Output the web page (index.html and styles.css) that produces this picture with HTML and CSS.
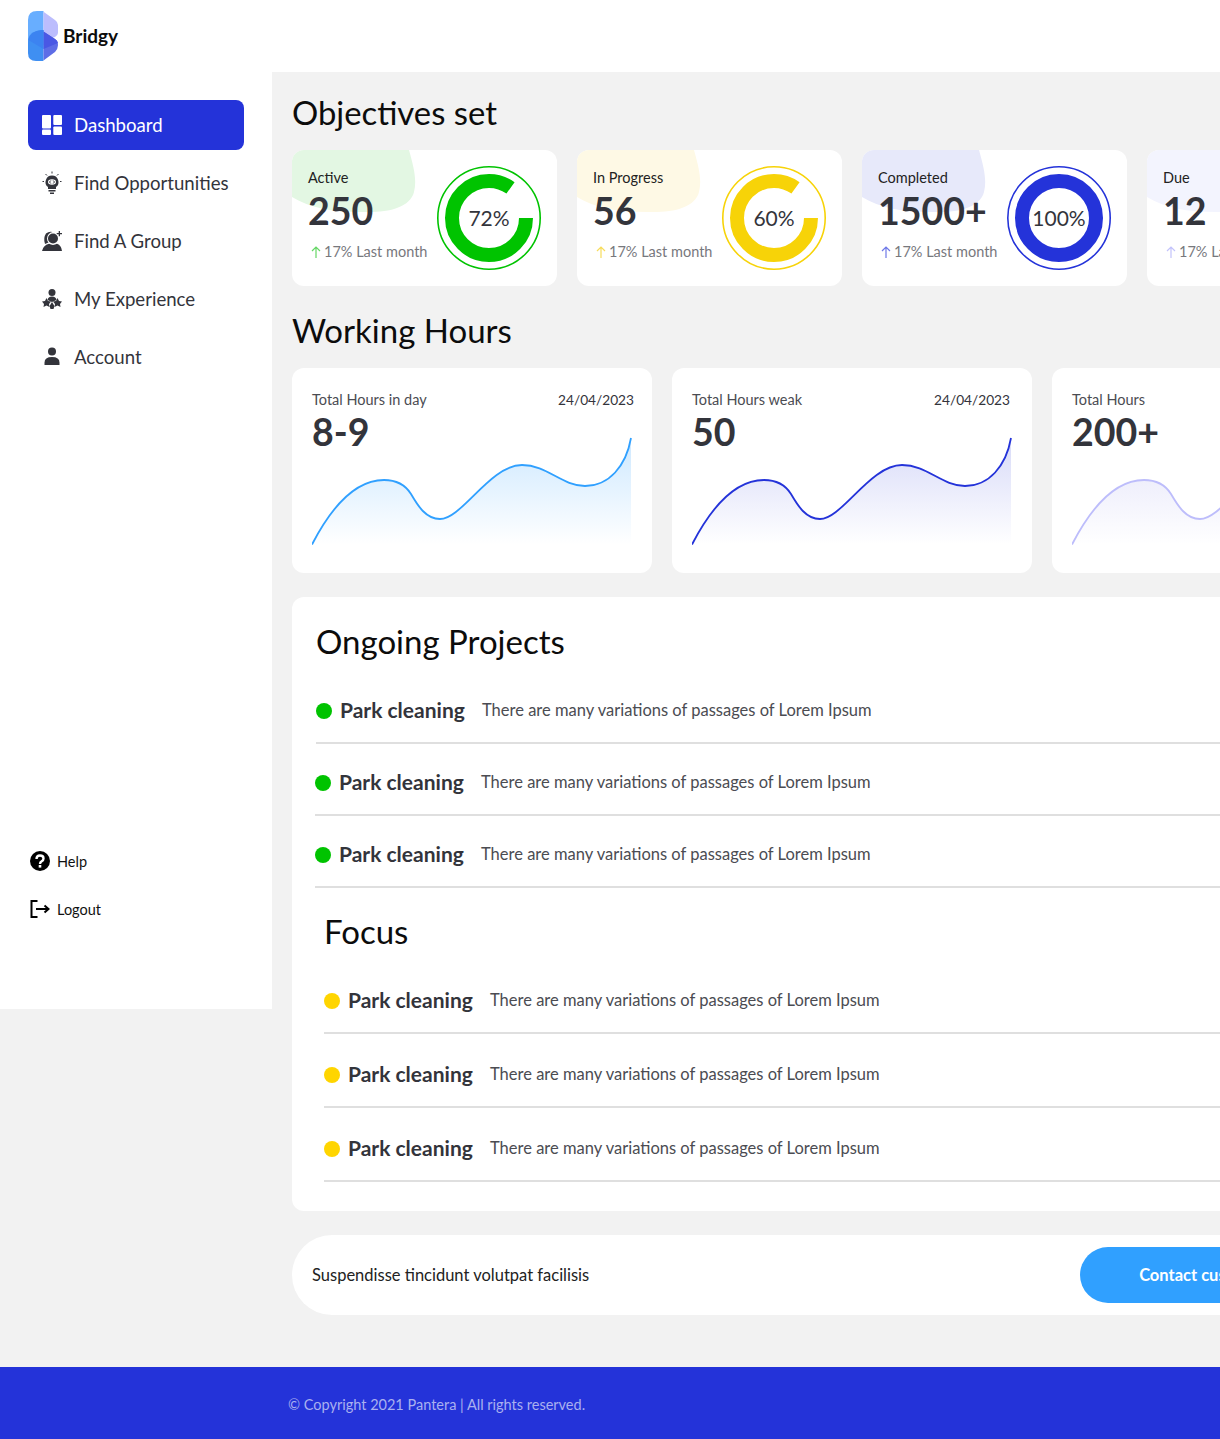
FILE: index.html
```html
<!DOCTYPE html>
<html lang="en">
<head>
<meta charset="utf-8">
<title>Bridgy</title>
<link rel="stylesheet" href="styles.css">
</head>
<body>
<header class="topbar">
  <svg class="logo" viewBox="0 0 30 50" aria-hidden="true">
    <path fill="#68aeff" d="M9 0H15.500V34H0V9Q0 0 9 0Z"/>
    <path fill="#bcbdfd" d="M15.500 .7L27 9Q30 11 30 14V22Q30 24 27 26L15.500 30Z"/>
    <path fill="#3f8ff2" d="M15.500 19H14Q0 20 0 31V42Q0 50 8 50H14Q15 50 15.500 49.500Z"/>
    <path fill="#5e6de6" d="M15.500 20.500L27 28Q30 30 30 34 30 38 27 41L15.500 49.500Z"/>
    <path fill="#4a58e4" d="M15.500 20.500L27 28Q29.500 29.500 30 32L15.500 38Z"/>
    <path fill="#3c83f1" d="M15.500 19H14Q2 20 .3 29L15.500 38Z"/>
  </svg>
  <span class="brand">Bridgy</span>
</header>
<div class="layout">
  <aside class="sidebar">
    <nav class="nav">
      <a class="nav-item nav-item--active">
        <svg class="nav-icon" viewBox="0 0 20 20" aria-hidden="true"><g fill="#fff"><rect width="9" height="13.500" rx="1"/><rect y="14.500" width="9" height="5.500" rx="1"/><rect x="11.300" width="8.700" height="10" rx="1"/><rect x="11.300" y="11.500" width="8.700" height="8.500" rx="1"/></g></svg>
        <span>Dashboard</span>
      </a>
      <a class="nav-item">
        <svg class="nav-icon nav-icon--bulb" viewBox="0 0 20 24" aria-hidden="true"><path fill="#33343b" d="M10 4.500a6.500 6.500 0 0 0-4 11.600V18h8v-1.900a6.500 6.500 0 0 0-4-11.600ZM6.500 19h7v1.500h-7ZM8 21.500h4V23H8Z"/><path stroke="#33343b" stroke-width="1" d="M10 .5V2.500M3.500 3 5 4.500M16.500 3 15 4.500M.5 10.500H2M18 10.500H19.500"/><ellipse cx="10" cy="11" rx="4" ry="2.800" fill="#fff"/><path fill="none" stroke="#33343b" stroke-width="1" d="M8.800 9.500 7.500 11 8.800 12.500M11.200 9.500 12.500 11 11.200 12.500"/></svg>
        <span>Find Opportunities</span>
      </a>
      <a class="nav-item">
        <svg class="nav-icon" viewBox="0 0 20 20" aria-hidden="true"><g fill="#33343b"><circle cx="11" cy="7.500" r="5"/><path d="M4 2.500Q7 0 10.500 1 5.500 2 5 7.500 5 10 6.500 11.500L3 13Q1 7 4 2.500ZM0 20Q1 14.500 7 12.800 11 15 15 12.800 19.500 14.500 20 20Z"/><path d="M16.700 0h1.300v2h2v1.300h-2v2h-1.300v-2h-2V2h2Z"/></g></svg>
        <span>Find A Group</span>
      </a>
      <a class="nav-item">
        <svg class="nav-icon" viewBox="0 0 20 20" aria-hidden="true"><g fill="#33343b"><circle cx="10" cy="3.500" r="3.500"/><path d="M5.500 11Q6 7.500 10 7.500T14.500 11L10 13Z"/><path d="M4.500 9 6 12 9 12.500 7 15 7.500 18 4.500 16.500 1.500 18 2 15 0 12.500 3 12ZM15.500 9 17 12 20 12.500 18 15 18.500 18 15.500 16.500 12.500 18 13 15 11 12.500 14 12Z"/><path d="M10 13 11.500 15.500 12.500 17 11.500 20H8.500L7.500 17 8.500 15.500Z"/></g></svg>
        <span>My Experience</span>
      </a>
      <a class="nav-item">
        <svg class="nav-icon" viewBox="0 0 20 20" aria-hidden="true"><g fill="#33343b"><circle cx="10" cy="4.500" r="4"/><path d="M2.500 18v-2.500Q2.500 10 10 10t7.500 5.500V18Z"/></g></svg>
        <span>Account</span>
      </a>
    </nav>
    <div class="side-links">
      <a class="side-link">
        <svg class="side-icon" viewBox="0 0 20 20" aria-hidden="true"><circle cx="10" cy="10" r="10" fill="#000"/><path fill="none" stroke="#fff" stroke-width="2.400" d="M6.500 8Q6.500 4.500 10 4.500T13.500 7.500Q13.500 9.200 11.700 10.300 10 11.300 10 13"/><rect x="8.700" y="14" width="2.600" height="2.600" fill="#fff"/></svg>
        <span>Help</span>
      </a>
      <a class="side-link">
        <svg class="side-icon" viewBox="0 0 20 20" aria-hidden="true"><path fill="none" stroke="#000" stroke-width="2" d="M7.500 2H1.500V18H7.500M6 10H18.500M14.500 6.500 18.500 10 14.500 13.500"/></svg>
        <span>Logout</span>
      </a>
    </div>
  </aside>
  <main class="main">
    <h2 class="section-title">Objectives set</h2>
    <section class="stat-row">
      <article class="stat-card">
        <svg class="blob" viewBox="0 0 124 63" aria-hidden="true"><path fill="#e3f7e3" d="M0 0H117C122 18 125 30 122 42C118 58 95 63 70 62C40 62 18 58 0 47Z"/></svg>
        <div class="stat-body">
          <div class="stat-label">Active</div>
          <div class="stat-value">250</div>
          <div class="stat-trend"><svg class="trend-arrow" viewBox="0 0 10 12" aria-hidden="true"><path fill="none" stroke="#66d766" stroke-width="1.200" d="M5 12V1M1 5 5 1 9 5"/></svg>17% Last month</div>
        </div>
        <div class="ring">
          <svg viewBox="0 0 104 104" aria-hidden="true"><circle cx="52" cy="52" r="51.200" fill="none" stroke="#00c300" stroke-width="1.600"/><circle cx="52" cy="52" r="37" fill="none" stroke="#00c300" stroke-width="14" stroke-dasharray="197 233"/></svg>
          <span class="ring-text">72%</span>
        </div>
      </article>
      <article class="stat-card">
        <svg class="blob" viewBox="0 0 124 63" aria-hidden="true"><path fill="#fef9e5" d="M0 0H117C122 18 125 30 122 42C118 58 95 63 70 62C40 62 18 58 0 47Z"/></svg>
        <div class="stat-body">
          <div class="stat-label">In Progress</div>
          <div class="stat-value">56</div>
          <div class="stat-trend"><svg class="trend-arrow" viewBox="0 0 10 12" aria-hidden="true"><path fill="none" stroke="#f7dc5c" stroke-width="1.200" d="M5 12V1M1 5 5 1 9 5"/></svg>17% Last month</div>
        </div>
        <div class="ring">
          <svg viewBox="0 0 104 104" aria-hidden="true"><circle cx="52" cy="52" r="51.200" fill="none" stroke="#f7d308" stroke-width="1.600"/><circle cx="52" cy="52" r="37" fill="none" stroke="#f7d308" stroke-width="14" stroke-dasharray="197 233"/></svg>
          <span class="ring-text">60%</span>
        </div>
      </article>
      <article class="stat-card">
        <svg class="blob" viewBox="0 0 124 63" aria-hidden="true"><path fill="#e7e9fa" d="M0 0H117C122 18 125 30 122 42C118 58 95 63 70 62C40 62 18 58 0 47Z"/></svg>
        <div class="stat-body">
          <div class="stat-label">Completed</div>
          <div class="stat-value">1500+</div>
          <div class="stat-trend"><svg class="trend-arrow" viewBox="0 0 10 12" aria-hidden="true"><path fill="none" stroke="#6f79e8" stroke-width="1.200" d="M5 12V1M1 5 5 1 9 5"/></svg>17% Last month</div>
        </div>
        <div class="ring">
          <svg viewBox="0 0 104 104" aria-hidden="true"><circle cx="52" cy="52" r="51.200" fill="none" stroke="#2433d9" stroke-width="1.600"/><circle cx="52" cy="52" r="37" fill="none" stroke="#2433d9" stroke-width="14"/></svg>
          <span class="ring-text">100%</span>
        </div>
      </article>
      <article class="stat-card">
        <svg class="blob" viewBox="0 0 124 63" aria-hidden="true"><path fill="#f3f4fe" d="M0 0H117C122 18 125 30 122 42C118 58 95 63 70 62C40 62 18 58 0 47Z"/></svg>
        <div class="stat-body">
          <div class="stat-label">Due</div>
          <div class="stat-value">12</div>
          <div class="stat-trend"><svg class="trend-arrow" viewBox="0 0 10 12" aria-hidden="true"><path fill="none" stroke="#c3c3fb" stroke-width="1.200" d="M5 12V1M1 5 5 1 9 5"/></svg>17% Last month</div>
        </div>
      </article>
    </section>

    <h2 class="section-title section-title--hours">Working Hours</h2>
    <section class="hours-row">
      <article class="hours-card">
        <div class="hours-head"><span>Total Hours in day</span><span class="hours-date">24/04/2023</span></div>
        <div class="hours-value">8-9</div>
        <svg class="spark" viewBox="0 0 320 110" aria-hidden="true">
          <defs><linearGradient id="g1" x1="0" y1="0" x2="0" y2="1"><stop offset="0" stop-color="#30a0ff" stop-opacity=".24"/><stop offset="1" stop-color="#30a0ff" stop-opacity="0"/></linearGradient></defs>
          <path fill="url(#g1)" d="M0 108.500C22 66 46 44 72 44C86 44 94 50 99 58C106 70 114 83 128 83C150 83 178 29 210 29C235 29 250 50 273 50C297 50 314 30 319 2V108.500Z"/>
          <path fill="none" stroke="#30a0ff" stroke-width="1.800" d="M0 108.500C22 66 46 44 72 44C86 44 94 50 99 58C106 70 114 83 128 83C150 83 178 29 210 29C235 29 250 50 273 50C297 50 314 30 319 2"/>
        </svg>
      </article>
      <article class="hours-card hours-card--wide">
        <div class="hours-head"><span>Total Hours weak</span><span class="hours-date">24/04/2023</span></div>
        <div class="hours-value">50</div>
        <svg class="spark" viewBox="0 0 320 110" aria-hidden="true">
          <defs><linearGradient id="g2" x1="0" y1="0" x2="0" y2="1"><stop offset="0" stop-color="#2433d9" stop-opacity=".18"/><stop offset="1" stop-color="#2433d9" stop-opacity="0"/></linearGradient></defs>
          <path fill="url(#g2)" d="M0 108.500C22 66 46 44 72 44C86 44 94 50 99 58C106 70 114 83 128 83C150 83 178 29 210 29C235 29 250 50 273 50C297 50 314 30 319 2V108.500Z"/>
          <path fill="none" stroke="#2433d9" stroke-width="1.800" d="M0 108.500C22 66 46 44 72 44C86 44 94 50 99 58C106 70 114 83 128 83C150 83 178 29 210 29C235 29 250 50 273 50C297 50 314 30 319 2"/>
        </svg>
      </article>
      <article class="hours-card">
        <div class="hours-head"><span>Total Hours</span></div>
        <div class="hours-value">200+</div>
        <svg class="spark" viewBox="0 0 320 110" aria-hidden="true">
          <defs><linearGradient id="g3" x1="0" y1="0" x2="0" y2="1"><stop offset="0" stop-color="#8f8fe8" stop-opacity=".24"/><stop offset="1" stop-color="#8f8fe8" stop-opacity="0"/></linearGradient></defs>
          <path fill="url(#g3)" d="M0 108.500C22 66 46 44 72 44C86 44 94 50 99 58C106 70 114 83 128 83C150 83 178 29 210 29C235 29 250 50 273 50C297 50 314 30 319 2V108.500Z"/>
          <path fill="none" stroke="#bdbdfb" stroke-width="1.800" d="M0 108.500C22 66 46 44 72 44C86 44 94 50 99 58C106 70 114 83 128 83C150 83 178 29 210 29C235 29 250 50 273 50C297 50 314 30 319 2"/>
        </svg>
      </article>
    </section>

    <section class="panel">
      <h2 class="panel-title">Ongoing Projects</h2>
      <div class="project"><span class="dot dot--green"></span><strong class="project-name">Park cleaning</strong><span class="project-desc">There are many variations of passages of Lorem Ipsum</span></div>
      <div class="project project--shift"><span class="dot dot--green"></span><strong class="project-name">Park cleaning</strong><span class="project-desc">There are many variations of passages of Lorem Ipsum</span></div>
      <div class="project project--shift"><span class="dot dot--green"></span><strong class="project-name">Park cleaning</strong><span class="project-desc">There are many variations of passages of Lorem Ipsum</span></div>
      <div class="focus">
        <h2 class="panel-title panel-title--focus">Focus</h2>
        <div class="project project--tall"><span class="dot dot--yellow"></span><strong class="project-name">Park cleaning</strong><span class="project-desc">There are many variations of passages of Lorem Ipsum</span></div>
        <div class="project project--tall"><span class="dot dot--yellow"></span><strong class="project-name">Park cleaning</strong><span class="project-desc">There are many variations of passages of Lorem Ipsum</span></div>
        <div class="project project--tall"><span class="dot dot--yellow"></span><strong class="project-name">Park cleaning</strong><span class="project-desc">There are many variations of passages of Lorem Ipsum</span></div>
      </div>
    </section>

    <section class="contact">
      <span>Suspendisse tincidunt volutpat facilisis</span>
      <a class="contact-btn">Contact customer</a>
    </section>
  </main>
</div>
<footer class="footer">© Copyright 2021 Pantera | All rights reserved.</footer>
</body>
</html>
```
FILE: styles.css
```css
* { box-sizing: border-box; }
html, body { margin: 0; padding: 0; }
body {
  width: 1220px;
  height: 1439px;
  overflow: hidden;
  background: #f2f2f2;
  color: #33343b;
  font-family: "Lato", "Noto Sans", sans-serif;
}
.topbar {
  height: 72px;
  background: #fff;
  display: flex;
  align-items: center;
  padding-left: 28px;
}
.logo { width: 30px; height: 50px; flex: none; }
.brand { margin: 0 0 2px 5px; font-size: 19px; font-weight: 700; color: #0c0c0c; }
.layout { display: flex; align-items: flex-start; height: 1295px; }
.sidebar {
  flex: none;
  width: 272px;
  height: 937px;
  background: #fff;
  padding: 28px 28px 0;
}
.nav { display: flex; flex-direction: column; gap: 8px; height: 751px; }
.nav-item {
  display: flex;
  align-items: center;
  gap: 12px;
  height: 50px;
  padding-left: 14px;
  border-radius: 8px;
  font-size: 18.600px;
  color: #33343b;
}
.nav-item span { margin-bottom: 1px; }
.nav-item--active { background: #2433d9; color: #fff; }
.nav-icon { width: 20px; height: 20px; flex: none; }
.nav-icon--bulb { height: 24px; }
.side-links { display: flex; flex-direction: column; gap: 28px; padding-left: 2px; }
.side-link { display: flex; align-items: center; gap: 7px; height: 20px; font-size: 14.500px; color: #111; }
.side-icon { width: 20px; height: 20px; flex: none; }
.main { flex: none; width: 948px; padding: 0 0 0 20px; }
.section-title {
  margin: 0;
  height: 78px;
  display: flex;
  align-items: center;
  padding-top: 2px;
  font-size: 32.800px;
  font-weight: 400;
  color: #0c0c0c;
}
.section-title--hours { height: 82px; padding-top: 6px; font-size: 33px; }
.stat-row, .hours-row { display: flex; gap: 20px; }
.stat-card {
  position: relative;
  flex: none;
  display: flex;
  justify-content: space-between;
  width: 265px;
  height: 136px;
  padding: 16px;
  background: #fff;
  border-radius: 12px;
  overflow: hidden;
}
.blob { position: absolute; left: 0; top: 0; width: 124px; height: 63px; }
.stat-body { position: relative; padding-top: 1px; }
.stat-label { font-size: 14.500px; line-height: 22px; color: #222; }
.stat-value { font-size: 37.500px; font-weight: 700; line-height: 44px; color: #33343b; }
.stat-trend { display: flex; align-items: center; gap: 3px; margin-top: 9px; padding-left: 3px; font-size: 14.500px; line-height: 20px; color: #77787d; white-space: nowrap; }
.trend-arrow { width: 10px; height: 12px; flex: none; }
.ring { position: relative; flex: none; width: 104px; height: 104px; }
.ring svg { display: block; width: 104px; height: 104px; }
.ring-text {
  position: absolute;
  inset: 0;
  display: flex;
  align-items: center;
  justify-content: center;
  padding-bottom: 2px;
  font-size: 21px;
  color: #33343b;
}
.hours-card {
  flex: none;
  width: 360px;
  height: 205px;
  padding: 21px 18px 0 20px;
  background: #fff;
  border-radius: 12px;
  overflow: hidden;
}
.hours-card--wide { padding-right: 22px; }
.hours-head { display: flex; justify-content: space-between; font-size: 14.500px; line-height: 22px; color: #4b4c52; }
.hours-date { color: #33343b; font-size: 13.700px; }
.hours-value { font-size: 37.500px; font-weight: 700; line-height: 44px; margin-top: -1px; color: #33343b; }
.spark { display: block; width: 320px; height: 110px; margin-top: -18px; }
.panel {
  width: 1100px;
  height: 614px;
  margin-top: 24px;
  padding: 19px 0 0 24px;
  background: #fff;
  border-radius: 12px;
}
.panel-title { margin: 0 0 6px; height: 50px; display: flex; align-items: center; font-size: 33px; font-weight: 400; color: #0c0c0c; }
.project {
  display: flex;
  align-items: center;
  height: 72px;
  padding-top: 4px;
  border-bottom: 2px solid #dfdfdf;
}
.project--shift { margin-left: -1px; }
.project--tall { height: 74px; padding-top: 6px; }
.dot { flex: none; width: 16px; height: 16px; border-radius: 50%; margin: 4px 8px 0 0; }
.dot--green { background: #00c300; }
.dot--yellow { background: #ffd500; }
.project-name { flex: none; width: 142px; font-size: 21px; font-weight: 700; color: #33343b; }
.project-desc { font-size: 16.500px; color: #4b4c52; margin-top: 2px; }
.focus { padding-left: 8px; margin-top: 18px; }
.panel-title--focus { margin-bottom: 4px; }
.contact {
  display: flex;
  align-items: center;
  justify-content: space-between;
  width: 1000px;
  height: 80px;
  margin-top: 24px;
  padding: 0 12px 0 20px;
  background: #fff;
  border-radius: 40px;
  font-size: 16.500px;
  color: #222;
}
.contact-btn {
  display: flex;
  align-items: center;
  justify-content: flex-end;
  width: 200px;
  height: 56px;
  padding-right: 10px;
  background: #30a0ff;
  border-radius: 28px;
  font-size: 16.500px;
  font-weight: 700;
  color: #fff;
}
.footer {
  height: 72px;
  display: flex;
  align-items: center;
  padding: 3px 0 0 288px;
  background: #2433d9;
  font-size: 14.500px;
  color: #aab0ef;
}
```
